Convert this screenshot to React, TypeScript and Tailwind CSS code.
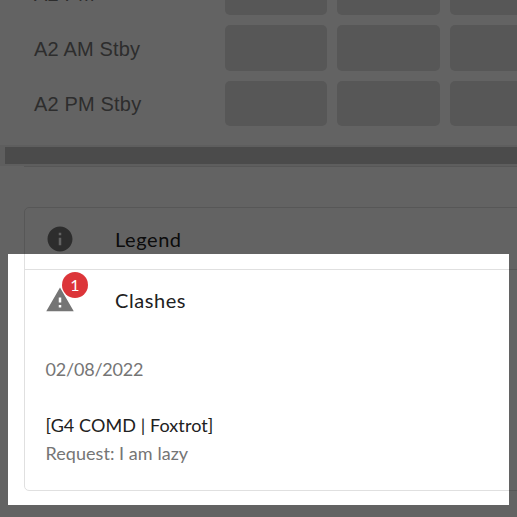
import type { ReactNode } from 'react';

function Shift({ label, height, pad }: { label: string; height: string; pad: string }) {
  return (
    <div className={`flex shrink-0 items-center ${height}`}>
      <div
        className={`w-[191px] shrink-0 whitespace-nowrap font-['Liberation_Sans',sans-serif] text-[20px] leading-[24px] tracking-[0.17px] text-[#757575] ${pad}`}
      >
        {label}
      </div>
      <div className="flex h-full gap-[10px]">
        <div className="h-full w-[102px] rounded-[5px] bg-[#e0e0e0]" />
        <div className="h-full w-[103px] rounded-[5px] bg-[#e0e0e0]" />
        <div className="h-full w-[102px] rounded-[5px] bg-[#e0e0e0]" />
      </div>
    </div>
  );
}

function PanelHeader({ icon, title, pad }: { icon: ReactNode; title: string; pad: string }) {
  return (
    <div className="flex h-[61px] items-center pl-[20px]">
      <div className="w-[70px]">{icon}</div>
      <div className={`text-[20px] leading-[28px] tracking-[0.56px] text-[#212121] ${pad}`}>{title}</div>
    </div>
  );
}

function InfoIcon() {
  return (
    <svg className="size-[30px]" viewBox="0 0 24 24" fill="#757575">
      <path d="M12 2C6.48 2 2 6.48 2 12s4.48 10 10 10 10-4.48 10-10S17.52 2 12 2zm1 15h-2v-6h2v6zm0-8h-2V7h2v2z" />
    </svg>
  );
}

function WarningIcon() {
  return (
    <div className="relative -mt-[2px] size-[30px]">
      <svg className="size-[30px]" viewBox="0 0 24 24" fill="#757575">
        <path d="M1 21h22L12 2 1 21zm12-3h-2v-2h2v2zm0-4h-2v-4h2v4z" />
      </svg>
      <span className="absolute -top-[13px] left-[17px] flex size-[26px] items-center justify-center rounded-full bg-[#dc3539] text-[16px] leading-none text-white">
        1
      </span>
    </div>
  );
}

export default function App() {
  return (
    <div className="relative h-[517px] w-[517px] overflow-hidden bg-white font-[Lato,sans-serif]">
      <div className="flex h-[145px] flex-col gap-[10px] overflow-hidden pl-[34px]">
        <div className="-mt-[31px]">
          <Shift label="A2 PM" height="h-[46px]" pad="pt-[4px]" />
        </div>
        <Shift label="A2 AM Stby" height="h-[46px]" pad="pt-[2px]" />
        <Shift label="A2 PM Stby" height="h-[45px]" pad="pt-0" />
      </div>
      <div className="h-[21px] bg-[#f1f1f1] pt-[2px] pl-[5px]">
        <div className="h-[17px] bg-[#c1c1c1]" />
      </div>
      <div className="ml-[24px] h-px bg-[#e0e0e0]" />

      <div className="mt-[40px] ml-[24px] h-[284px] w-[600px] rounded-[5px] border border-[#e0e0e0]">
        <PanelHeader icon={<InfoIcon />} title="Legend" pad="pt-[1px]" />
        <div className="h-px bg-[#e0e0e0]" />
        <PanelHeader icon={<WarningIcon />} title="Clashes" pad="pb-[2px]" />
        <div className="pt-[24px] pl-[20.5px] text-[18px] leading-[28px] text-[#757575]">
          <p className="tracking-[-0.2px]">02/08/2022</p>
          <p className="mt-[28px] tracking-[0.08px] text-[#212121]">[G4 COMD | Foxtrot]</p>
          <p className="tracking-[0.05px]">Request: I am lazy</p>
        </div>
      </div>

      <div className="absolute top-[254px] left-[8px] h-[251px] w-[501px] shadow-[0_0_0_600px_rgba(0,0,0,0.612)]" />
    </div>
  );
}
